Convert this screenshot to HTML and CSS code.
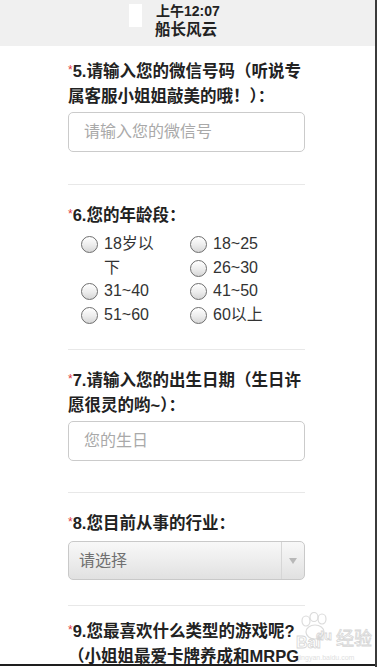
FILE: index.html
```html
<!DOCTYPE html>
<html lang="zh-CN">
<head>
<meta charset="utf-8">
<title>船长风云</title>
<link rel="stylesheet" href="styles.css">
</head>
<body>
<div class="frame">
  <div class="screen">
    <div class="viewport">
      <header class="status">
        <div class="status-icon"></div>
        <div class="status-text">
          <div class="time">上午12:07</div>
          <div class="name">船长风云</div>
        </div>
      </header>
      <main class="form">
        <section class="q q-first">
          <h3 class="q-title"><span class="req">*</span>5.请输入您的微信号码（听说专属客服小姐姐敲美的哦！）：</h3>
          <input class="field" type="text" placeholder="请输入您的微信号">
        </section>
        <section class="q q-radio">
          <h3 class="q-title"><span class="req">*</span>6.您的年龄段：</h3>
          <div class="radios">
            <label class="opt opt-tall"><span class="dot"></span><span class="opt-text narrow">18岁以下</span></label>
            <label class="opt"><span class="dot"></span><span class="opt-text">18~25</span></label>
            <label class="opt"><span class="dot"></span><span class="opt-text">26~30</span></label>
            <label class="opt"><span class="dot"></span><span class="opt-text">31~40</span></label>
            <label class="opt"><span class="dot"></span><span class="opt-text">41~50</span></label>
            <label class="opt"><span class="dot"></span><span class="opt-text">51~60</span></label>
            <label class="opt"><span class="dot"></span><span class="opt-text">60以上</span></label>
          </div>
        </section>
        <section class="q">
          <h3 class="q-title"><span class="req">*</span>7.请输入您的出生日期（生日许愿很灵的哟~）：</h3>
          <input class="field" type="text" placeholder="您的生日">
        </section>
        <section class="q q-select">
          <h3 class="q-title"><span class="req">*</span>8.您目前从事的行业：</h3>
          <div class="select">
            <span class="select-text">请选择</span>
            <span class="select-arrow"><span class="tri"></span></span>
          </div>
        </section>
        <section class="q q-last">
          <h3 class="q-title"><span class="req">*</span>9.您最喜欢什么类型的游戏呢?（小姐姐最爱卡牌养成和MRPG类的游戏）</h3>
        </section>
      </main>
      <div class="watermark">
        <svg class="paw" width="34" height="30" viewBox="0 0 34 30">
          <g fill="none" stroke="#d6d6d6" stroke-width="1.2">
            <ellipse cx="8" cy="9" rx="4" ry="5"/>
            <ellipse cx="16" cy="5" rx="4" ry="4.5"/>
            <ellipse cx="24" cy="7" rx="4" ry="5"/>
            <ellipse cx="17" cy="20" rx="9" ry="7"/>
          </g>
        </svg>
        <span class="wm-bai">Bai</span><span class="wm-du">du</span><span class="wm-jy">经验</span>
        <span class="wm-url">jingyan.baidu.com</span>
      </div>
    </div>
    <div class="bottom-line"></div>
  </div>
  <div class="right-edge"></div>
</div>
</body>
</html>
```

FILE: styles.css
```css
* { box-sizing: border-box; }

html, body {
  margin: 0;
  padding: 0;
  background: #ffffff;
}

body {
  font-family: "Liberation Sans", "Noto Sans CJK SC", "Noto Sans", sans-serif;
  color: #222;
  width: 377px;
  height: 667px;
  overflow: hidden;
}

.frame {
  display: flex;
  width: 377px;
  height: 667px;
}

.screen {
  width: 375px;
  height: 667px;
  display: flex;
  flex-direction: column;
}

.viewport {
  position: relative;
  height: 664px;
  overflow: hidden;
  background: #fff;
}

.bottom-line {
  height: 2px;
  background: #1e1e1e;
}

.right-edge {
  width: 2px;
  height: 667px;
  background: #3b3b3b;
}

/* status bar */
.status {
  height: 46px;
  background: #f0f0f0;
  display: flex;
  align-items: flex-start;
  padding-left: 129px;
  gap: 13px;
}

.status-icon {
  width: 13px;
  height: 23px;
  margin-top: 4px;
  background: #fff;
}

.status-text {
  padding-top: 2px;
  font-weight: 700;
  color: #222;
}

.time {
  font-size: 14px;
  line-height: 18px;
  padding-left: 1px;
}

.name {
  font-size: 15.5px;
  line-height: 19px;
}

/* form */
.form {
  padding: 0 70px 0 68px;
}

.q {
  padding: 18px 0 31px;
  border-bottom: 1px solid #e8e8e8;
}

.q-first {
  padding-top: 13px;
  padding-bottom: 32px;
}

.q-radio {
  padding-bottom: 23px;
}

.q-select {
  padding-bottom: 25px;
}

.q-select .q-title {
  margin-bottom: 5px;
}

.q-last {
  padding-top: 13px;
  border-bottom: none;
}

.q-title {
  margin: 0 0 3px;
  font-size: 16.5px;
  line-height: 25px;
  font-weight: 700;
  color: #222;
}

.req {
  color: #e0393e;
  font-size: 12px;
  font-weight: 400;
  line-height: 0;
  vertical-align: 3px;
}

.field {
  display: block;
  width: 100%;
  height: 40px;
  margin: 0;
  padding: 0 15px;
  border: 1px solid #cbcbcb;
  border-radius: 5px;
  background: #fff;
  font-family: "Liberation Sans", "Noto Sans CJK SC", sans-serif;
  font-size: 16px;
  color: #333;
  outline: none;
}

.field::placeholder {
  color: #a9a9a9;
}

/* radios */
.radios {
  display: grid;
  grid-template-columns: 109px 1fr;
  padding-left: 13px;
  margin-top: 4px;
}

.opt {
  display: flex;
  align-items: flex-start;
  gap: 6px;
  font-size: 16px;
  line-height: 23.5px;
  color: #333;
}

.opt-tall {
  grid-row: span 2;
}

.dot {
  flex: none;
  width: 17px;
  height: 17px;
  margin-top: 4px;
  border-radius: 50%;
  border: 1px solid #6e6e6e;
  background: linear-gradient(#ffffff 0%, #ececec 55%, #d6d6d6 100%);
  box-shadow: inset 0 1px 1px rgba(255,255,255,0.9);
}

.opt-text.narrow {
  width: 56px;
}

/* select */
.select {
  display: flex;
  align-items: stretch;
  height: 39px;
  border: 1px solid #c9c9c9;
  border-radius: 5px;
  background: linear-gradient(#f8f8f8 0%, #ededed 50%, #e1e1e1 100%);
  overflow: hidden;
}

.select-text {
  flex: 1;
  padding-left: 10px;
  font-size: 16px;
  line-height: 37px;
  color: #707070;
}

.select-arrow {
  width: 23px;
  border-left: 1px solid #d6d6d6;
  display: flex;
  align-items: center;
  justify-content: center;
}

.tri {
  width: 0;
  height: 0;
  border-left: 4px solid transparent;
  border-right: 4px solid transparent;
  border-top: 6px solid #b8b8b8;
}

/* watermark */
.watermark {
  position: absolute;
  left: 296px;
  top: 612px;
  width: 80px;
  height: 54px;
  opacity: 0.85;
  pointer-events: none;
  font-family: "Liberation Sans", sans-serif;
}

.paw {
  position: absolute;
  left: 2px;
  top: 0;
}

.wm-bai {
  position: absolute;
  left: 0;
  top: 22px;
  font-size: 16px;
  font-weight: 700;
  color: transparent;
  -webkit-text-stroke: 0.8px #d0d0d0;
}

.wm-du {
  position: absolute;
  left: 20px;
  top: 16px;
  font-size: 13px;
  font-weight: 700;
  color: transparent;
  -webkit-text-stroke: 0.8px #d0d0d0;
}

.wm-jy {
  position: absolute;
  left: 40px;
  top: 12px;
  font-family: "Noto Sans CJK SC", sans-serif;
  font-size: 18px;
  color: transparent;
  -webkit-text-stroke: 0.8px #cfcfcf;
}

.wm-url {
  position: absolute;
  left: 2px;
  top: 42px;
  font-size: 7px;
  color: #dadada;
}
```
